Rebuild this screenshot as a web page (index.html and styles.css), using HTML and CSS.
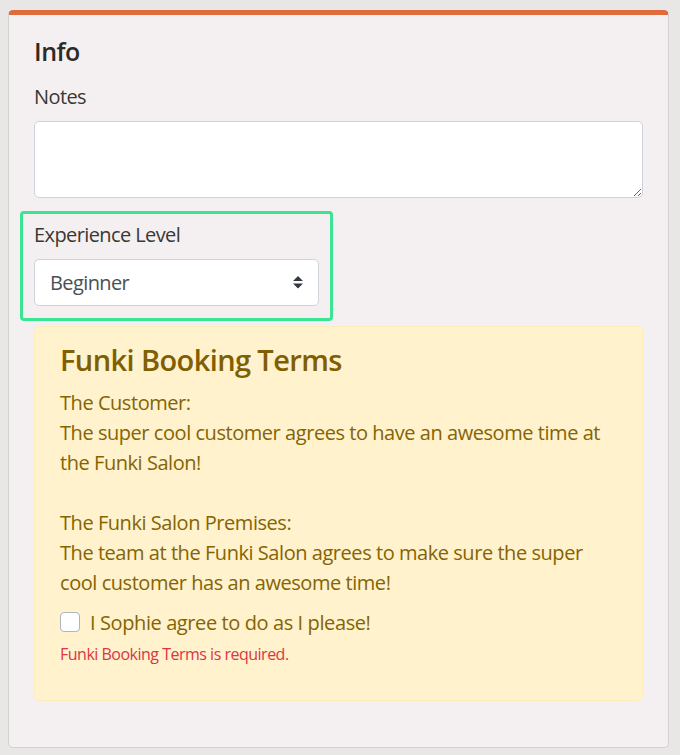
FILE: index.html
```html
<!DOCTYPE html>
<html>
<head>
<meta charset="utf-8">
<link rel="stylesheet" href="styles.css">
</head>
<body>
<div class="card">
  <div class="card-body">
    <h5 class="card-title">Info</h5>
    <div class="form-group">
      <label class="form-label">Notes</label>
      <textarea class="form-control" rows="2"></textarea>
    </div>
    <div class="highlight">
      <label class="form-label">Experience Level</label>
      <div class="custom-select">
        <span class="select-value">Beginner</span>
        <svg class="select-arrows" viewBox="0 0 4 5" width="10" height="12.5"><path d="M2 0L0 2h4zm0 5L0 3h4z" fill="#343a40"/></svg>
      </div>
    </div>
    <div class="alert">
      <h4 class="alert-heading">Funki Booking Terms</h4>
      <p class="terms">The Customer:<br>The super cool customer agrees to have an awesome time at the Funki Salon!<br><br>The Funki Salon Premises:<br>The team at the Funki Salon agrees to make sure the super cool customer has an awesome time!</p>
      <div class="check">
        <span class="checkbox"></span>
        <span class="check-label">I Sophie agree to do as I please!</span>
      </div>
      <div class="invalid">Funki Booking Terms is required.</div>
    </div>
  </div>
</div>
</body>
</html>
```

FILE: styles.css
```css
html, body {
  margin: 0;
  padding: 0;
}
body {
  background: #e8e7e6;
  font-family: "Open Sans", "Noto Sans", sans-serif;
  font-size: 20px;
  line-height: 30px;
  letter-spacing: -0.45px;
  color: #3a3833;
}
.card {
  box-sizing: border-box;
  width: 661px;
  margin: 10px 0 0 8px;
  background: #f4f0f1;
  border: 1px solid #d3d0d0;
  border-top: 5px solid #e06b3d;
  border-radius: 5px;
}
.card-body {
  padding: 21px 25px 26px 25px;
}
.card-title {
  margin: 0 0 16px 0;
  font-size: 25px;
  line-height: 30px;
  font-weight: 600;
  letter-spacing: -0.5px;
  color: #2c2b26;
}
.form-label {
  display: block;
  margin-bottom: 9px;
  letter-spacing: -0.6px;
}
.form-group {
  margin-bottom: 13px;
}
.form-control {
  display: block;
  box-sizing: border-box;
  width: 100%;
  height: 77px;
  margin: 0;
  padding: 7px 15px;
  background: #fff;
  border: 1px solid #ced4da;
  border-radius: 5px;
  font: inherit;
  resize: vertical;
}
.highlight {
  box-sizing: border-box;
  width: 313px;
  margin-left: -14px;
  padding: 6px 11px 12px 11px;
  border: 3px solid #3be492;
  border-radius: 4px;
}
.custom-select {
  box-sizing: border-box;
  height: 47px;
  display: flex;
  align-items: center;
  justify-content: space-between;
  padding: 0 15px;
  background: #fff;
  border: 1px solid #ced4da;
  border-radius: 5px;
  color: #495057;
}
.select-value {
  letter-spacing: -0.6px;
}
.select-arrows {
  display: block;
}
.alert {
  margin: 5px 0 20px 0;
  padding: 15px 25px;
  background: #fff2cc;
  border: 1px solid #ffeeba;
  border-radius: 5px;
  color: #856404;
}
.alert-heading {
  margin: 0 0 10px 0;
  font-size: 29px;
  line-height: 36px;
  font-weight: 600;
  letter-spacing: -0.6px;
  color: #7f5f02;
}
.terms {
  margin: 0 0 10px 0;
}
.check {
  display: flex;
  align-items: center;
  gap: 10px;
}
.checkbox {
  box-sizing: border-box;
  flex: none;
  width: 20px;
  height: 20px;
  background: #fff;
  border: 1px solid #adb5bd;
  border-radius: 4px;
  margin-top: -2px;
}
.check-label {
  letter-spacing: -0.4px;
}
.invalid {
  margin-top: 4px;
  margin-bottom: 19px;
  font-size: 16px;
  line-height: 24px;
  letter-spacing: -0.5px;
  color: #dc3545;
}
```
